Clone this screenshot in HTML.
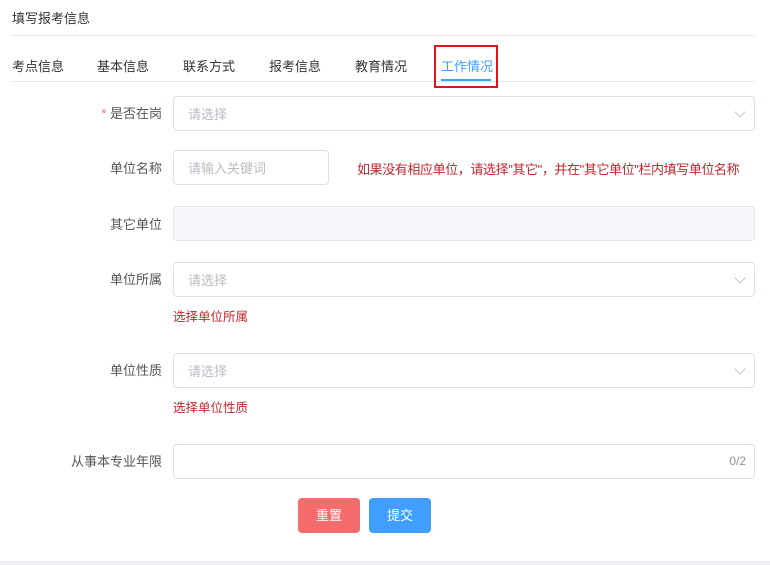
<!DOCTYPE html>
<html><head><meta charset="utf-8"><style>
body{margin:0;width:770px;height:565px;background:#fff;font-family:"Liberation Sans","Noto Sans CJK SC",sans-serif;font-size:13px;color:#333;position:relative;overflow:hidden}
.a{position:absolute;white-space:nowrap}
.inp{position:absolute;left:173px;width:580px;height:33px;border:1px solid #dcdfe6;border-radius:4px;background:#fff;box-sizing:content-box}
.ph{position:absolute;left:14px;top:7px;color:#b8bcc4;font-size:13px}
.lab{position:absolute;right:608px;color:#555;font-size:13px}
.chev{position:absolute;right:10px;top:11px;width:7px;height:7px;border-right:1px solid #c0c4cc;border-bottom:1px solid #c0c4cc;transform:rotate(45deg)}
.err{position:absolute;left:173px;color:#c0262d;font-size:12.5px}
.tab{position:absolute;top:56px;font-size:13px;color:#333}
</style></head><body>
<div class="a" style="left:12px;top:8px;font-size:13px">填写报考信息</div>
<div class="a" style="left:12px;top:35px;width:743px;height:1px;background:#e4e7ed"></div>
<div class="tab" style="left:12px">考点信息</div>
<div class="tab" style="left:97px">基本信息</div>
<div class="tab" style="left:183px">联系方式</div>
<div class="tab" style="left:269px">报考信息</div>
<div class="tab" style="left:355px">教育情况</div>
<div class="tab" style="left:441px;color:#409eff">工作情况</div>
<div class="a" style="left:12px;top:81px;width:743px;height:1px;background:#e4e7ed"></div>
<div class="a" style="left:441px;top:79px;width:50px;height:2px;background:#409eff"></div>
<div class="a" style="left:434px;top:45px;width:60px;height:39px;border:2px solid #e0141c"></div>

<div class="lab" style="top:103px"><span style="color:#f56c6c">* </span>是否在岗</div>
<div class="inp" style="top:96px"><span class="ph">请选择</span><span class="chev"></span></div>

<div class="lab" style="top:158px">单位名称</div>
<div class="inp" style="top:150px;width:154px"><span class="ph">请输入关键词</span></div>
<div class="a" style="left:357px;top:159px;color:#c0262d;font-size:13px;letter-spacing:-0.4px">如果没有相应单位，请选择"其它"，并在"其它单位"栏内填写单位名称</div>

<div class="lab" style="top:214px">其它单位</div>
<div class="inp" style="top:206px;background:#f5f7fa;border-color:#e4e7ed"></div>

<div class="lab" style="top:269px">单位所属</div>
<div class="inp" style="top:262px"><span class="ph">请选择</span><span class="chev"></span></div>
<div class="err" style="top:306px">选择单位所属</div>

<div class="lab" style="top:360px">单位性质</div>
<div class="inp" style="top:353px"><span class="ph">请选择</span><span class="chev"></span></div>
<div class="err" style="top:397px">选择单位性质</div>

<div class="lab" style="top:451px">从事本专业年限</div>
<div class="inp" style="top:444px"><span class="a" style="right:8px;top:9px;color:#909399;font-size:12px">0/2</span></div>

<div class="a" style="left:298px;top:498px;width:62px;height:35px;background:#f56c6c;border-radius:4px;color:#fff;text-align:center;line-height:35px">重置</div>
<div class="a" style="left:369px;top:498px;width:62px;height:35px;background:#409eff;border-radius:4px;color:#fff;text-align:center;line-height:35px">提交</div>
<div class="a" style="left:0;top:561px;width:770px;height:4px;background:#eef0f4"></div>
</body></html>
